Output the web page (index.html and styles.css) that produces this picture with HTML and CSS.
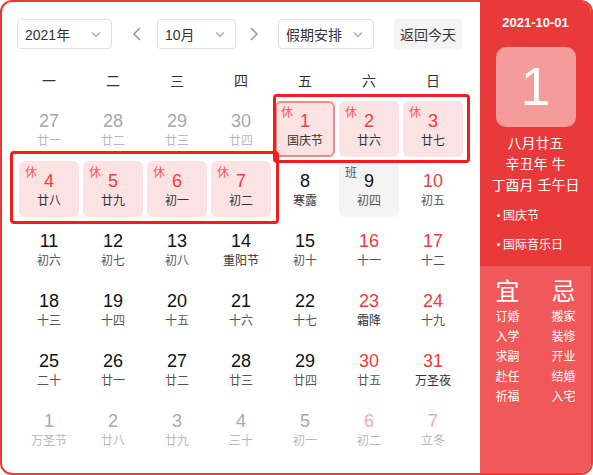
FILE: index.html
```html
<!DOCTYPE html>
<html lang="zh-CN">
<head>
<meta charset="utf-8">
<title>万年历</title>
<link rel="stylesheet" href="styles.css">
</head>
<body>
<div class="app">
  <div class="main">
    <div class="toolbar">
      <div class="select sel-year"><span>2021年</span><svg class="chev" viewBox="0 0 12 12"><path d="M2 4.5 L6 8.5 L10 4.5"/></svg></div>
      <button class="arrow arrow-prev"><svg viewBox="0 0 10 16"><path d="M8 2 L2 8 L8 14"/></svg></button>
      <div class="select sel-month"><span>10月</span><svg class="chev" viewBox="0 0 12 12"><path d="M2 4.5 L6 8.5 L10 4.5"/></svg></div>
      <button class="arrow arrow-next"><svg viewBox="0 0 10 16"><path d="M2 2 L8 8 L2 14"/></svg></button>
      <div class="select sel-holiday"><span>假期安排</span><svg class="chev" viewBox="0 0 12 12"><path d="M2 4.5 L6 8.5 L10 4.5"/></svg></div>
      <button class="today">返回今天</button>
    </div>
    <div class="weekdays">
      <span>一</span><span>二</span><span>三</span><span>四</span><span>五</span><span>六</span><span>日</span>
    </div>
    <div class="grid">
      <div class="cell other"><div class="num">27</div><div class="lunar">廿一</div></div>
      <div class="cell other"><div class="num">28</div><div class="lunar">廿二</div></div>
      <div class="cell other"><div class="num">29</div><div class="lunar">廿三</div></div>
      <div class="cell other"><div class="num">30</div><div class="lunar">廿四</div></div>
      <div class="cell rest selected"><span class="tag">休</span><div class="num">1</div><div class="lunar fest">国庆节</div></div>
      <div class="cell rest"><span class="tag">休</span><div class="num">2</div><div class="lunar">廿六</div></div>
      <div class="cell rest"><span class="tag">休</span><div class="num">3</div><div class="lunar">廿七</div></div>

      <div class="cell rest"><span class="tag">休</span><div class="num">4</div><div class="lunar">廿八</div></div>
      <div class="cell rest"><span class="tag">休</span><div class="num">5</div><div class="lunar">廿九</div></div>
      <div class="cell rest"><span class="tag">休</span><div class="num">6</div><div class="lunar">初一</div></div>
      <div class="cell rest"><span class="tag">休</span><div class="num">7</div><div class="lunar">初二</div></div>
      <div class="cell"><div class="num">8</div><div class="lunar fest">寒露</div></div>
      <div class="cell work"><span class="tag">班</span><div class="num">9</div><div class="lunar">初四</div></div>
      <div class="cell weekend"><div class="num">10</div><div class="lunar">初五</div></div>

      <div class="cell"><div class="num">11</div><div class="lunar">初六</div></div>
      <div class="cell"><div class="num">12</div><div class="lunar">初七</div></div>
      <div class="cell"><div class="num">13</div><div class="lunar">初八</div></div>
      <div class="cell"><div class="num">14</div><div class="lunar fest">重阳节</div></div>
      <div class="cell"><div class="num">15</div><div class="lunar">初十</div></div>
      <div class="cell weekend"><div class="num">16</div><div class="lunar">十一</div></div>
      <div class="cell weekend"><div class="num">17</div><div class="lunar">十二</div></div>

      <div class="cell"><div class="num">18</div><div class="lunar">十三</div></div>
      <div class="cell"><div class="num">19</div><div class="lunar">十四</div></div>
      <div class="cell"><div class="num">20</div><div class="lunar">十五</div></div>
      <div class="cell"><div class="num">21</div><div class="lunar">十六</div></div>
      <div class="cell"><div class="num">22</div><div class="lunar">十七</div></div>
      <div class="cell weekend"><div class="num">23</div><div class="lunar fest">霜降</div></div>
      <div class="cell weekend"><div class="num">24</div><div class="lunar">十九</div></div>

      <div class="cell"><div class="num">25</div><div class="lunar">二十</div></div>
      <div class="cell"><div class="num">26</div><div class="lunar">廿一</div></div>
      <div class="cell"><div class="num">27</div><div class="lunar">廿二</div></div>
      <div class="cell"><div class="num">28</div><div class="lunar">廿三</div></div>
      <div class="cell"><div class="num">29</div><div class="lunar">廿四</div></div>
      <div class="cell weekend"><div class="num">30</div><div class="lunar">廿五</div></div>
      <div class="cell weekend"><div class="num">31</div><div class="lunar fest">万圣夜</div></div>

      <div class="cell other"><div class="num">1</div><div class="lunar">万圣节</div></div>
      <div class="cell other"><div class="num">2</div><div class="lunar">廿八</div></div>
      <div class="cell other"><div class="num">3</div><div class="lunar">廿九</div></div>
      <div class="cell other"><div class="num">4</div><div class="lunar">三十</div></div>
      <div class="cell other"><div class="num">5</div><div class="lunar">初一</div></div>
      <div class="cell other other-weekend"><div class="num">6</div><div class="lunar">初二</div></div>
      <div class="cell other other-weekend"><div class="num">7</div><div class="lunar">立冬</div></div>
    </div>
    <div class="mark mark-a"></div>
    <div class="mark mark-b"></div>
  </div>
  <div class="side">
    <div class="side-top">
      <div class="side-date">2021-10-01</div>
      <div class="day-box">1</div>
      <div class="side-lunar">
        <div>八月廿五</div>
        <div>辛丑年 牛</div>
        <div>丁酉月 壬午日</div>
      </div>
      <ul class="fests">
        <li><i class="dot"></i>国庆节</li>
        <li><i class="dot"></i>国际音乐日</li>
      </ul>
    </div>
    <div class="side-bottom">
      <div class="yj">
        <div class="yj-col">
          <div class="yj-title">宜</div>
          <div>订婚</div><div>入学</div><div>求嗣</div><div>赴任</div><div>祈福</div>
        </div>
        <div class="yj-col">
          <div class="yj-title">忌</div>
          <div>搬家</div><div>装修</div><div>开业</div><div>结婚</div><div>入宅</div>
        </div>
      </div>
    </div>
  </div>
</div>
</body>
</html>
```

FILE: styles.css
```css
* { box-sizing: border-box; }
html, body {
  margin: 0;
  padding: 0;
  background: #ffffff;
}
body {
  font-family: "Liberation Sans", "Noto Sans CJK SC", sans-serif;
  color: #333;
}
.app {
  width: 593px;
  height: 475px;
  border: 2px solid #e8393b;
  border-radius: 12px;
  overflow: hidden;
  display: flex;
  background: #fff;
}
.main {
  position: relative;
  width: 478px;
  flex: none;
  padding: 17px 0 0 15px;
}
.toolbar {
  display: flex;
  align-items: center;
  height: 30px;
}
.select {
  height: 30px;
  border: 1px solid #dcdfe6;
  border-radius: 4px;
  display: flex;
  align-items: center;
  justify-content: space-between;
  padding: 0 9px 0 7px;
  font-size: 14px;
  color: #333;
}
.sel-year { width: 95px; }
.sel-month { width: 79px; }
.sel-holiday { width: 96px; }
.chev {
  width: 12px;
  height: 12px;
  fill: none;
  stroke: #a8abb2;
  stroke-width: 1.3;
}
.arrow {
  width: 20px;
  height: 30px;
  padding: 0;
  border: 0;
  background: transparent;
  display: flex;
  align-items: center;
  justify-content: center;
}
.arrow svg {
  width: 10px;
  height: 16px;
  fill: none;
  stroke: #909399;
  stroke-width: 1.5;
}
.arrow-prev { margin: 0 10px 0 15px; }
.arrow-next { margin: 0 14px 0 8px; }
.today {
  margin-left: 20px;
  width: 68px;
  height: 30px;
  border: 0;
  border-radius: 4px;
  background: #f4f4f5;
  font-family: inherit;
  font-size: 14px;
  color: #333;
  padding: 0;
}
.weekdays {
  margin: 20px 0 0 2px;
  display: grid;
  grid-template-columns: repeat(7, 60px);
  column-gap: 4px;
  height: 24px;
  line-height: 24px;
  font-size: 14px;
  color: #333;
  text-align: center;
}
.grid {
  margin: 8px 0 0 2px;
  display: grid;
  grid-template-columns: repeat(7, 60px);
  grid-auto-rows: 56px;
  gap: 4px;
}
.cell {
  position: relative;
  border: 2px solid transparent;
  border-radius: 6px;
  padding-top: 7px;
  text-align: center;
}
.num {
  font-size: 18px;
  line-height: 22px;
  color: #111;
}
.lunar {
  font-size: 12px;
  line-height: 18px;
  color: #555;
}
.lunar.fest { color: #333; }
.tag {
  position: absolute;
  left: 4px;
  top: 3px;
  font-size: 12px;
  line-height: 14px;
}
.rest { background: #fde2e3; }
.rest .num { color: #f23b3d; }
.rest .tag { color: #f05a5c; }
.rest .lunar { color: #333; }
.selected { border-color: #f08b8c; }
.work { background: #f4f4f5; }
.work .tag { color: #555; }
.weekend .num { color: #f23b3d; }
.other .num { color: #a8a8a8; }
.other .lunar { color: #b8b8b8; }
.other-weekend .num { color: #f7a6a7; }
.mark {
  position: absolute;
  border: 3px solid #f41d1d;
  border-radius: 4px;
  pointer-events: none;
}
.mark-a {
  left: 271px;
  top: 92px;
  width: 197px;
  height: 69px;
}
.mark-b {
  left: 8px;
  top: 149px;
  width: 269px;
  height: 73px;
}
.side {
  flex: 1;
  display: flex;
  flex-direction: column;
  color: #fff;
}
.side-top {
  height: 264px;
  background: #e8393b;
  padding-top: 12px;
  display: flex;
  flex-direction: column;
  align-items: center;
}
.side-date {
  font-size: 13px;
  font-weight: bold;
  line-height: 18px;
}
.day-box {
  margin-top: 15px;
  width: 80px;
  height: 80px;
  border-radius: 10px;
  background: #f49b9c;
  font-size: 53px;
  line-height: 80px;
  text-align: center;
}
.side-lunar {
  margin-top: 6px;
  font-size: 14px;
  line-height: 21px;
  text-align: center;
}
.fests {
  list-style: none;
  margin: 10px 0 0;
  padding: 0 0 0 16px;
  align-self: stretch;
  font-size: 12px;
  line-height: 20px;
}
.fests li + li { margin-top: 9px; }
.dot {
  display: inline-block;
  width: 3px;
  height: 3px;
  border-radius: 50%;
  background: #fff;
  vertical-align: middle;
  margin: 0 3px 3px 1px;
}
.side-bottom {
  flex: 1;
  background: #f05859;
  padding-top: 12px;
}
.yj {
  display: flex;
  justify-content: center;
  gap: 32px;
}
.yj-col {
  font-size: 12px;
  line-height: 20px;
  text-align: center;
}
.yj-title {
  font-size: 24px;
  line-height: 28px;
  margin-bottom: 1px;
}
```
